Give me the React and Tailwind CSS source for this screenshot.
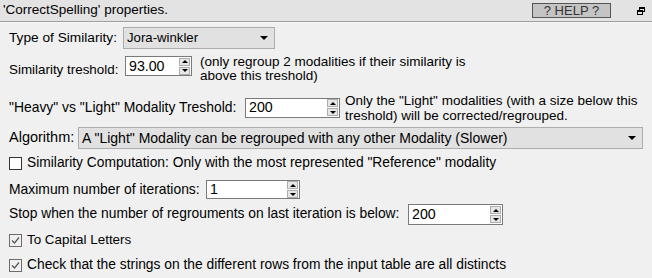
import { useState } from "react";

const Spin = () => (
	<div className="flex flex-col justify-center gap-[1px] w-[11px] h-[18px] mr-[1px]">
		<div className="h-[8px] flex items-center justify-center bg-[#e6e6e6] border border-[#adadad]">
			<div className="w-0 h-0 border-l-[3px] border-r-[3px] border-b-[3px] border-l-transparent border-r-transparent border-b-black" />
		</div>
		<div className="h-[8px] flex items-center justify-center bg-[#e6e6e6] border border-[#adadad]">
			<div className="w-0 h-0 border-l-[3px] border-r-[3px] border-t-[3px] border-l-transparent border-r-transparent border-t-black" />
		</div>
	</div>
);

const SpinInput = ({ value, width, height = "h-[20px]" }) => (
	<div className={`flex items-center justify-between bg-white border border-[#7a7a7a] ${width} ${height}`}>
		<span className="pl-[3px] leading-none text-[14.2px]">{value}</span>
		<Spin />
	</div>
);

const Arrow = () => (
	<div className="w-0 h-0 border-l-[4px] border-r-[4px] border-t-[4px] border-l-transparent border-r-transparent border-t-black" />
);

const Check = ({ checked }) =>
	checked ? (
		<div className="w-[13px] h-[13px] border border-[#6d6d6d] bg-[#f0f0f0] flex items-center justify-center">
			<svg width="11" height="11" viewBox="0 0 11 11">
				<path d="M2 5.5 L4.5 8 L9 2.5" fill="none" stroke="#555" strokeWidth="1.2" />
			</svg>
		</div>
	) : (
		<div className="w-[13px] h-[13px] border border-[#333] bg-white" />
	);

export default function App() {
	const [open] = useState(false);

	return (
		<div
			className="w-[652px] h-[278px] bg-[#f0f0f0] text-black overflow-hidden text-[14px]"
			style={{ fontFamily: "'Liberation Sans', Arial, sans-serif" }}
		>
			{/* Header */}
			<div className="h-[21px] bg-[#e3e3e3] flex items-center justify-between pl-[3px] pr-[7px]">
				<span className="text-[13.5px]">'CorrectSpelling' properties.</span>
				<div className="flex items-center gap-[26px]">
					<button className="w-[79px] h-[15px] bg-[#c4c4c4] border border-[#555] text-[#333] text-[13px] leading-none flex items-center justify-center">
						? HELP ?
					</button>
					<svg width="8" height="8" viewBox="0 0 8 8">
						<rect x="2.5" y="0.5" width="5" height="4" fill="none" stroke="#000" />
						<rect x="2" y="0" width="6" height="2" fill="#000" />
						<rect x="0.5" y="3.5" width="5" height="4" fill="#e3e3e3" stroke="#000" />
						<rect x="0" y="3" width="6" height="2" fill="#000" />
					</svg>
				</div>
			</div>
			<div className="h-[1px] bg-[#a0a0a0]" />
			<div className="h-[1px] bg-[#f7f7f7]" />

			<div className="pl-[9px] flex flex-col">
				{/* Type of Similarity */}
				<div className="mt-[4px] h-[22px] flex items-center">
					<span className="w-[114px] text-[13.7px]">Type of Similarity:</span>
					<div className="w-[152px] h-[22px] bg-[#e1e1e1] border border-[#adadad] flex items-center justify-between pl-[3px] pr-[6px]">
						<span className="text-[13.2px]">Jora-winkler</span>
						<Arrow />
					</div>
				</div>

				{/* Similarity treshold */}
				<div className="mt-[6px] h-[29px] flex items-start">
					<span className="w-[116px] mt-[5px] text-[13.4px]">Similarity treshold:</span>
					<div className="mt-[1px]">
						<SpinInput value="93.00" width="w-[67px]" />
					</div>
					<div className="ml-[8px] leading-[14px] text-[13.5px]">
						<div>(only regroup 2 modalities if their similarity is</div>
						<div>above this treshold)</div>
					</div>
				</div>

				{/* Heavy vs Light */}
				<div className="mt-[9px] h-[29px] flex items-center">
					<span className="w-[236px] text-[13.9px]">"Heavy" vs "Light" Modality Treshold:</span>
					<SpinInput value="200" width="w-[95px]" />
					<div className="ml-[5px] leading-[15px] text-[13.5px]">
						<div>Only the "Light" modalities (with a size below this</div>
						<div>treshold) will be corrected/regrouped.</div>
					</div>
				</div>

				{/* Algorithm */}
				<div className="mt-[5px] h-[22px] flex items-center">
					<span className="w-[69px] text-[14.5px]">Algorithm:</span>
					<div className="w-[565px] h-[22px] bg-[#e1e1e1] border border-[#adadad] flex items-center justify-between pl-[3px] pr-[6px]">
						<span className="text-[14px]">A "Light" Modality can be regrouped with any other Modality (Slower)</span>
						<Arrow />
					</div>
				</div>

				{/* Similarity computation */}
				<div className="mt-[6px] h-[16px] flex items-center gap-[5px]">
					<Check checked={open} />
					<span className="text-[13.8px]">Similarity Computation: Only with the most represented "Reference" modality</span>
				</div>

				{/* Max iterations */}
				<div className="mt-[9px] h-[19px] flex items-center">
					<span className="w-[197px] text-[13.9px]">Maximum number of iterations:</span>
					<SpinInput value="1" width="w-[94px]" height="h-[19px]" />
				</div>

				{/* Stop when */}
				<div className="mt-[5px] h-[21px] flex items-center">
					<span className="w-[399px] text-[13.8px]">Stop when the number of regrouments on last iteration is below:</span>
					<SpinInput value="200" width="w-[95px]" height="h-[21px]" />
				</div>

				{/* To capital letters */}
				<div className="mt-[7px] h-[16px] flex items-center gap-[5px]">
					<Check checked />
					<span className="text-[13.4px]">To Capital Letters</span>
				</div>

				{/* Distinct rows */}
				<div className="mt-[9px] h-[16px] flex items-center gap-[5px]">
					<Check checked />
					<span className="text-[13.8px]">Check that the strings on the different rows from the input table are all distincts</span>
				</div>
			</div>
		</div>
	);
}
